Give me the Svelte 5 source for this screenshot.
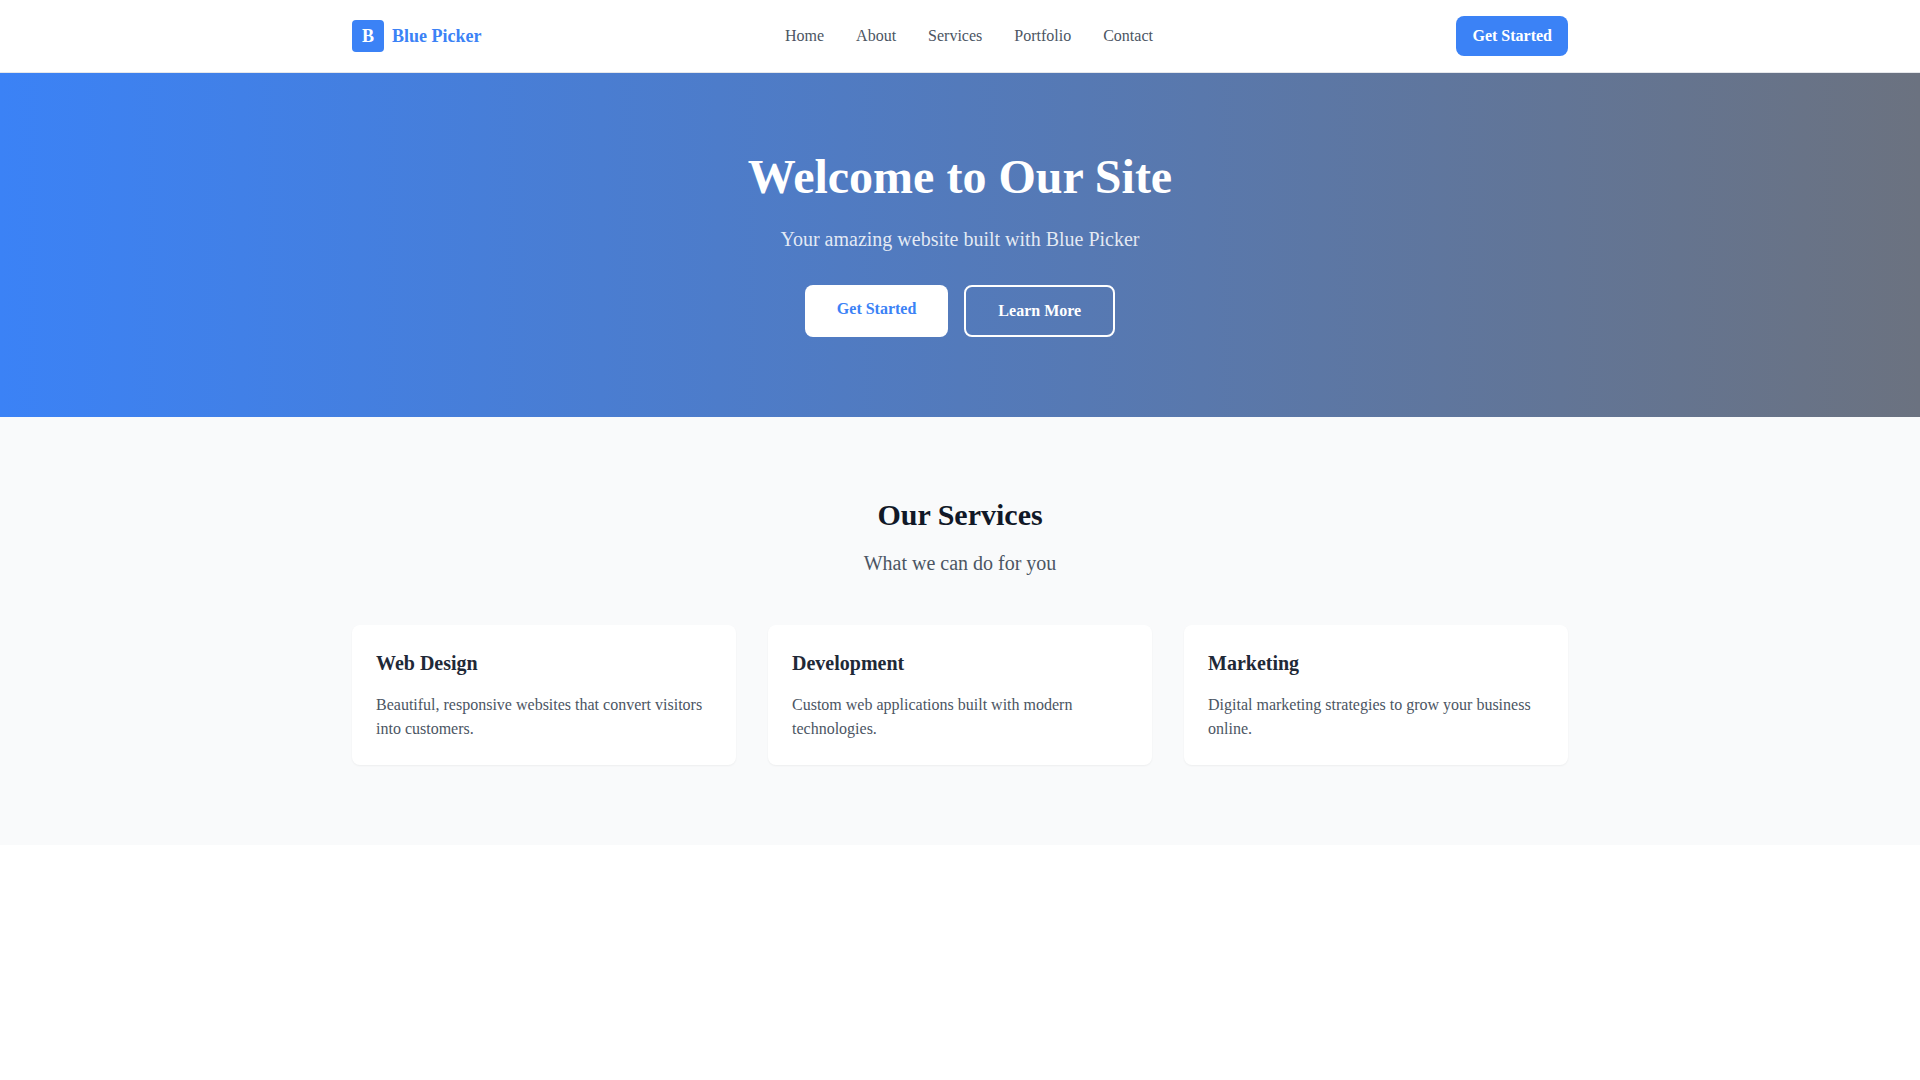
<script>
  const links = ['Home', 'About', 'Services', 'Portfolio', 'Contact'];
  const services = [
    { title: 'Web Design', text: 'Beautiful, responsive websites that convert visitors into customers.' },
    { title: 'Development', text: 'Custom web applications built with modern technologies.' },
    { title: 'Marketing', text: 'Digital marketing strategies to grow your business online.' }
  ];
</script>

<header class="header">
  <div class="container bar">
    <a class="brand" href="#home">
      <span class="mark">B</span>
      <span>Blue Picker</span>
    </a>
    <nav class="nav">
      {#each links as link}
        <a href={'#' + link.toLowerCase()}>{link}</a>
      {/each}
    </nav>
    <a class="cta" href="#contact">Get Started</a>
  </div>
</header>

<section class="hero">
  <h1>Welcome to Our Site</h1>
  <p>Your amazing website built with Blue Picker</p>
  <div class="actions">
    <a class="primary" href="#contact">Get Started</a>
    <a class="secondary" href="#about">Learn More</a>
  </div>
</section>

<section class="services">
  <div class="container">
    <h2>Our Services</h2>
    <p class="lead">What we can do for you</p>
    <div class="grid">
      {#each services as service}
        <article class="card">
          <h3>{service.title}</h3>
          <p>{service.text}</p>
        </article>
      {/each}
    </div>
  </div>
</section>

<style>
  :global(body) {
    margin: 0;
    background: #fff;
    color: #111827;
    font-family: "Liberation Serif", "Times New Roman", serif;
    font-size: 16px;
    line-height: 24px;
  }
  h1, h2, h3, p { margin: 0; }
  a { text-decoration: none; }
  .container {
    box-sizing: border-box;
    max-width: 1248px;
    margin: 0 auto;
    padding: 0 16px;
  }
  .header {
    background: #fff;
    border-bottom: 1px solid #e5e7eb;
  }
  .bar {
    display: flex;
    align-items: center;
    justify-content: space-between;
    padding-top: 16px;
    padding-bottom: 16px;
  }
  .brand {
    display: flex;
    align-items: center;
    gap: 8px;
    color: #3b82f6;
    font-size: 18px;
    font-weight: 700;
  }
  .mark {
    display: flex;
    align-items: center;
    justify-content: center;
    width: 32px;
    height: 32px;
    border-radius: 4px;
    background: #3b82f6;
    color: #fff;
  }
  .nav {
    display: flex;
    flex-wrap: wrap;
    gap: 32px;
  }
  .nav a { color: #4b5563; }
  .cta {
    padding: 8px 16px;
    border-radius: 8px;
    background: #3b82f6;
    color: #fff;
    font-weight: 600;
  }
  .hero {
    padding: 80px 16px;
    background: linear-gradient(90deg, #3b82f6, #6b7280);
    color: #fff;
    text-align: center;
  }
  h1 {
    margin-bottom: 24px;
    font-size: 48px;
    line-height: 48px;
  }
  .hero p {
    margin-bottom: 32px;
    color: rgba(255, 255, 255, 0.85);
    font-size: 20px;
    line-height: 28px;
  }
  .actions {
    display: flex;
    justify-content: center;
    gap: 16px;
  }
  .primary, .secondary {
    padding: 12px 32px;
    border-radius: 8px;
    font-weight: 600;
  }
  .primary {
    background: #fff;
    color: #3b82f6;
  }
  .secondary {
    border: 2px solid #fff;
    color: #fff;
  }
  .services {
    padding: 80px 0;
    background: #f9fafb;
  }
  h2 {
    margin-bottom: 16px;
    font-size: 30px;
    line-height: 36px;
    text-align: center;
  }
  .lead {
    margin-bottom: 48px;
    color: #4b5563;
    font-size: 20px;
    line-height: 28px;
    text-align: center;
  }
  .grid {
    display: grid;
    grid-template-columns: repeat(auto-fit, minmax(280px, 1fr));
    gap: 32px;
  }
  .card {
    padding: 24px;
    border-radius: 8px;
    background: #fff;
    box-shadow: 0 1px 2px rgba(0, 0, 0, 0.05);
  }
  h3 {
    margin-bottom: 16px;
    color: #1f2937;
    font-size: 20px;
    line-height: 28px;
  }
  .card p { color: #4b5563; }
</style>
